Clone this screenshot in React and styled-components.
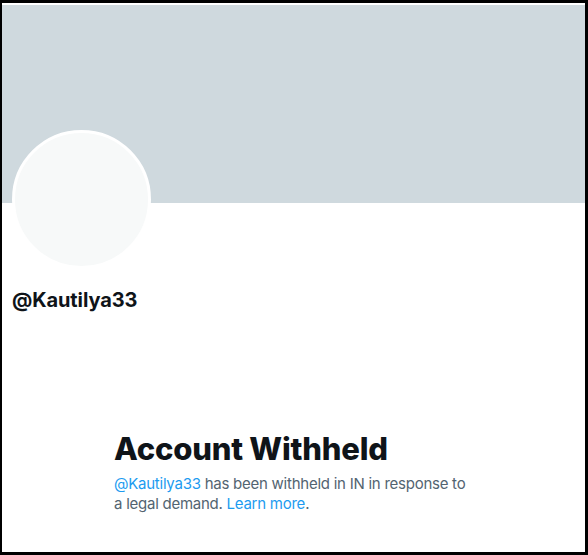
import React from 'react';
import styled, { createGlobalStyle } from 'styled-components';

const GlobalStyle = createGlobalStyle`
  html, body {
    margin: 0;
    padding: 0;
    background: #ffffff;
  }
  body {
    font-family: Inter, "Noto Sans", "Liberation Sans", sans-serif;
    -webkit-font-smoothing: antialiased;
  }
`;

const Frame = styled.div`
  box-sizing: border-box;
  width: 588px;
  height: 555px;
  border-style: solid;
  border-color: #000000;
  border-width: 3px 3px 3px 2px;
  padding-top: 2px;
  background: #ffffff;
  overflow: hidden;
`;

const Banner = styled.div`
  height: 198px;
  background: #cfd9de;
`;

const ProfileHead = styled.div`
  padding: 0 10px;
`;

const Avatar = styled.div`
  box-sizing: border-box;
  width: 139px;
  height: 139px;
  margin-top: -73px;
  border-radius: 50%;
  border: 3px solid #ffffff;
  background: #f7f9f9;
`;

const Handle = styled.div`
  margin-top: 19px;
  font-size: 20px;
  line-height: 24px;
  font-weight: 700;
  color: #0f1419;
  letter-spacing: -0.1px;
`;

const EmptyState = styled.div`
  box-sizing: border-box;
  width: 360px;
  margin: 119px 0 0 112px;
`;

const Title = styled.h2`
  margin: 0 0 7px;
  font-size: 31px;
  line-height: 36px;
  font-weight: 800;
  color: #0f1419;
  letter-spacing: -0.2px;
`;

const Text = styled.p`
  margin: 0;
  font-size: 15px;
  line-height: 20px;
  color: #536471;
  letter-spacing: -0.25px;
`;

const Link = styled.a`
  color: #1d9bf0;
  text-decoration: none;
  cursor: pointer;
`;

export default function App() {
  return (
    <>
      <GlobalStyle />
      <Frame>
        <Banner />
        <ProfileHead>
          <Avatar />
          <Handle>@Kautilya33</Handle>
        </ProfileHead>
        <EmptyState>
          <Title>Account Withheld</Title>
          <Text>
            <Link>@Kautilya33</Link> has been withheld in IN in response to a legal demand.{' '}
            <Link>Learn more</Link>.
          </Text>
        </EmptyState>
      </Frame>
    </>
  );
}
